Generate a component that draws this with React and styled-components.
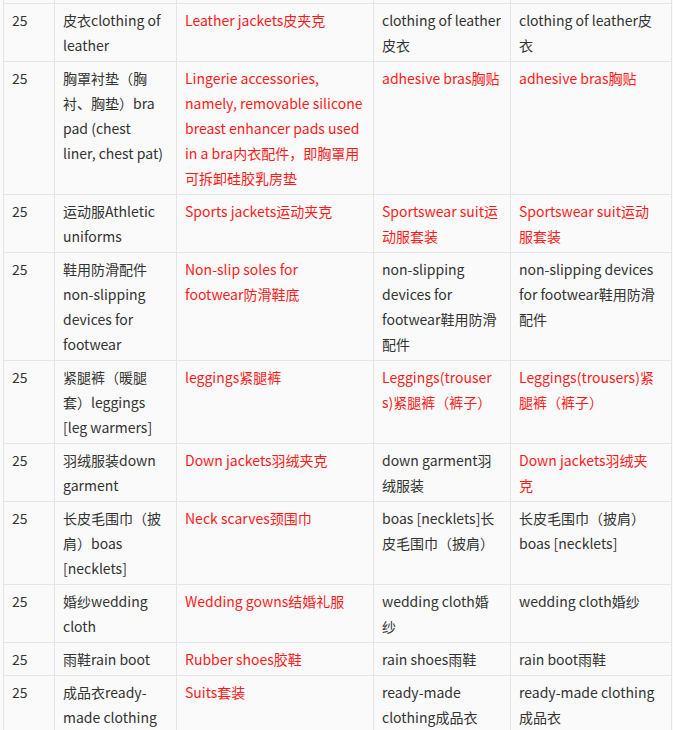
import React from 'react';
import styled, { createGlobalStyle } from 'styled-components';

const Global = createGlobalStyle`
  html, body {
    margin: 0;
    padding: 0;
    background: #fafafa;
  }
`;

const Page = styled.div`
  padding-left: 3px;
  overflow: hidden;
  height: 730px;
`;

const Table = styled.table`
  border-collapse: collapse;
  table-layout: fixed;
  width: 668px;
  font-family: "Noto Sans CJK SC", "Microsoft YaHei", sans-serif;
  font-size: 14px;
  line-height: 25px;
  color: #333;
`;

const Cell = styled.td`
  border: 1px solid #e4e4e4;
  padding: 4px 8px 3px;
  vertical-align: top;
  white-space: nowrap;
  color: ${(p) => (p.$red ? '#ff1a1a' : '#333')};
`;

const Line = styled.span`
  display: block;
  height: 25px;
  line-height: 25px;
`;

const Spacer = styled.td`
  border-left: 1px solid #e4e4e4;
  border-right: 1px solid #e4e4e4;
  height: 3px;
  padding: 0;
`;

const widths = [51, 122, 197, 137, 161];

// each cell: [text, red]; "\n" marks where the line breaks in the source
const rows = [
  [['皮衣clothing of\nleather'], ['Leather jackets皮夹克', 1], ['clothing of leather\n皮衣'], ['clothing of leather皮\n衣']],
  [
    ['胸罩衬垫（胸\n衬、胸垫）bra\npad (chest\nliner, chest pat)'],
    ['Lingerie accessories,\nnamely, removable silicone\nbreast enhancer pads used\nin a bra内衣配件，即胸罩用\n可拆卸硅胶乳房垫', 1],
    ['adhesive bras胸贴', 1],
    ['adhesive bras胸贴', 1],
  ],
  [['运动服Athletic\nuniforms'], ['Sports jackets运动夹克', 1], ['Sportswear suit运\n动服套装', 1], ['Sportswear suit运动\n服套装', 1]],
  [
    ['鞋用防滑配件\nnon-slipping\ndevices for\nfootwear'],
    ['Non-slip soles for\nfootwear防滑鞋底', 1],
    ['non-slipping\ndevices for\nfootwear鞋用防滑\n配件'],
    ['non-slipping devices\nfor footwear鞋用防滑\n配件'],
  ],
  [
    ['紧腿裤（暖腿\n套）leggings\n[leg warmers]'],
    ['leggings紧腿裤', 1],
    ['Leggings(trouser\ns)紧腿裤（裤子）', 1],
    ['Leggings(trousers)紧\n腿裤（裤子）', 1],
  ],
  [['羽绒服装down\ngarment'], ['Down jackets羽绒夹克', 1], ['down garment羽\n绒服装'], ['Down jackets羽绒夹\n克', 1]],
  [
    ['长皮毛围巾（披\n肩）boas\n[necklets]'],
    ['Neck scarves颈围巾', 1],
    ['boas [necklets]长\n皮毛围巾（披肩）'],
    ['长皮毛围巾（披肩）\nboas [necklets]'],
  ],
  [['婚纱wedding\ncloth'], ['Wedding gowns结婚礼服', 1], ['wedding cloth婚\n纱'], ['wedding cloth婚纱']],
  [['雨鞋rain boot'], ['Rubber shoes胶鞋', 1], ['rain shoes雨鞋'], ['rain boot雨鞋']],
  [['成品衣ready-\nmade clothing'], ['Suits套装', 1], ['ready-made\nclothing成品衣'], ['ready-made clothing\n成品衣']],
];

const Lines = ({ text }) =>
  text.split('\n').map((line, i) => <Line key={i}>{line}</Line>);

export default function App() {
  return (
    <>
      <Global />
      <Page>
        <Table>
          <colgroup>
            {widths.map((w, i) => (
              <col key={i} style={{ width: w }} />
            ))}
          </colgroup>
          <tbody>
            <tr>
              {widths.map((w, i) => (
                <Spacer key={i} />
              ))}
            </tr>
            {rows.map((cells, r) => (
              <tr key={r}>
                <Cell>
                  <Line>25</Line>
                </Cell>
                {cells.map(([text, red], c) => (
                  <Cell key={c} $red={!!red}>
                    <Lines text={text} />
                  </Cell>
                ))}
              </tr>
            ))}
          </tbody>
        </Table>
      </Page>
    </>
  );
}
